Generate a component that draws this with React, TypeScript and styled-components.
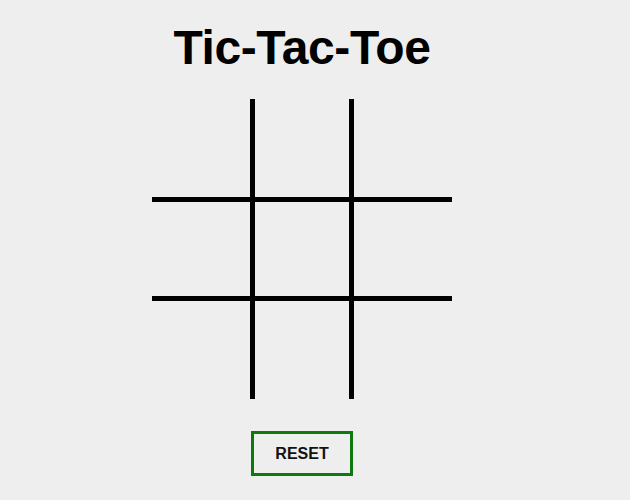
import { FC, useState } from 'react';
import styled, { createGlobalStyle } from 'styled-components';

type Mark = 'X' | 'O' | null;

const GlobalStyle = createGlobalStyle`
  body {
    margin: 0;
    background: #eeeeee;
    font-family: 'Liberation Sans', Arial, sans-serif;
  }
`;

const App: FC = () => {
  const [cells, setCells] = useState<Mark[]>(Array(9).fill(null));
  const [turn, setTurn] = useState<'X' | 'O'>('X');

  const play = (i: number) => {
    if (cells[i]) return;
    setCells((prev) => prev.map((c, j) => (j === i ? turn : c)));
    setTurn((t) => (t === 'X' ? 'O' : 'X'));
  };

  const reset = () => {
    setCells(Array(9).fill(null));
    setTurn('X');
  };

  return (
    <Page>
      <GlobalStyle />
      <Title>Tic-Tac-Toe</Title>
      <Board>
        {cells.map((c, i) => (
          <Cell key={i} $col={i % 3} $row={Math.floor(i / 3)} onClick={() => play(i)}>
            {c}
          </Cell>
        ))}
      </Board>
      <ResetButton onClick={reset}>RESET</ResetButton>
    </Page>
  );
};

export default App;

const Page = styled.div`
  width: 604px;
  display: flex;
  flex-direction: column;
  align-items: center;
`;

const Title = styled.h1`
  margin: 20px 0 24px;
  font-size: 48px;
  font-weight: 700;
  letter-spacing: -0.4px;
  line-height: 55px;
  color: #000;
`;

const Board = styled.div`
  display: grid;
  grid-template-columns: 98px 104px 98px;
  grid-template-rows: 98px 104px 98px;
`;

const Cell = styled.div<{ $col: number; $row: number }>`
  box-sizing: border-box;
  display: flex;
  align-items: center;
  justify-content: center;
  font-size: 64px;
  font-weight: 700;
  cursor: pointer;
  border-left: ${(p) => (p.$col === 1 ? '5px solid #000' : 'none')};
  border-right: ${(p) => (p.$col === 1 ? '5px solid #000' : 'none')};
  border-top: ${(p) => (p.$row === 1 ? '5px solid #000' : 'none')};
  border-bottom: ${(p) => (p.$row === 1 ? '5px solid #000' : 'none')};
`;

const ResetButton = styled.button`
  margin-top: 32px;
  width: 102px;
  height: 45px;
  box-sizing: border-box;
  background: transparent;
  border: 3px solid #0c7a0c;
  font-family: 'Liberation Sans', Arial, sans-serif;
  font-size: 16px;
  font-weight: 700;
  color: #111;
  cursor: pointer;
`;
